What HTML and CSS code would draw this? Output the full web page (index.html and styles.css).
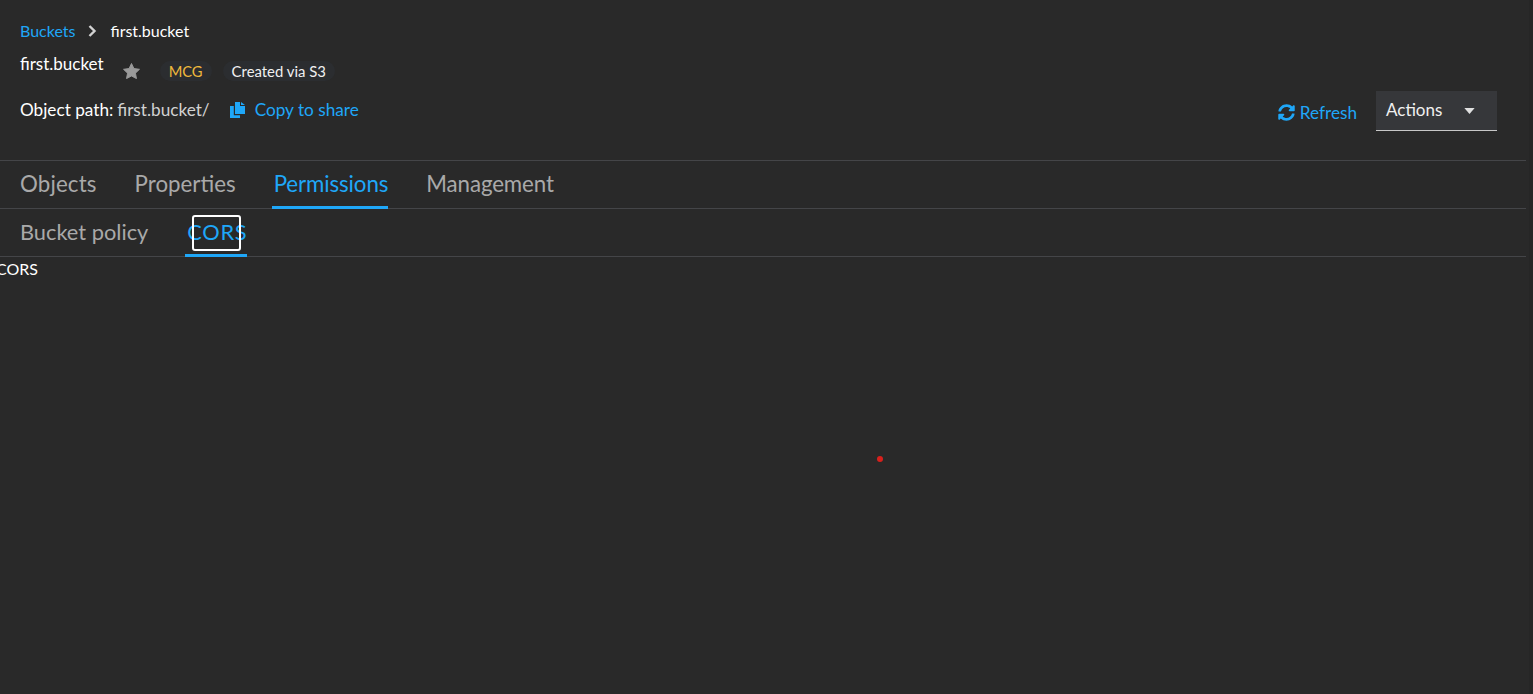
FILE: index.html
```html
<!DOCTYPE html>
<html lang="en">
<head>
<meta charset="utf-8">
<title>first.bucket</title>
<link rel="stylesheet" href="styles.css">
</head>
<body>
<div class="shell">
<div class="page">
  <header class="header">
    <div class="header-info">
      <nav class="breadcrumb">
        <a class="link">Buckets</a>
        <svg class="crumb-icon" viewBox="0 0 10 14"><path d="M2.5 2 L7.5 7 L2.5 12" fill="none" stroke="#d2d2d2" stroke-width="2.4"/></svg>
        <span class="crumb-current">first.bucket</span>
      </nav>
      <div class="title-row">
        <h1 class="title">first.bucket</h1>
        <svg class="star" viewBox="0 0 18 17"><path d="M9 0.5 L11.6 5.9 L17.5 6.7 L13.2 10.8 L14.3 16.6 L9 13.8 L3.7 16.6 L4.8 10.8 L0.5 6.7 L6.4 5.9 Z" fill="#9a9a9a" stroke="#9a9a9a" stroke-linejoin="round"/></svg>
        <span class="label label-gold">MCG</span>
        <span class="label">Created via S3</span>
      </div>
      <div class="path-row">
        <span class="path-key">Object path:</span>
        <span class="path-value">first.bucket/</span>
        <a class="link copy">
          <svg class="copy-icon" viewBox="0 0 15 16"><path d="M5 0 H10 V4 H15 V12 H5 Z M11 0 L15 3 H11 Z" fill="#1fa7f8"/><path d="M3.8 4 V13.3 H10 V16 H0 V4 Z" fill="#1fa7f8"/></svg>
          Copy to share
        </a>
      </div>
    </div>
    <div class="header-actions">
      <a class="link refresh">
        <svg class="refresh-icon" viewBox="0 0 512 512"><path fill="#1fa7f8" d="M370.7 133.3C339.5 104 298.9 88 255.8 88c-77.5.1-144.3 53.2-162.8 126.9-1.3 5.4-6.1 9.2-11.7 9.2H24.1c-7.5 0-13.2-6.8-11.8-14.2C33.9 94.9 134.8 8 256 8c66.4 0 126.8 26.1 171.3 68.7L463 41c15.1-15.1 41-4.4 41 17v134c0 13.3-10.7 24-24 24H346c-21.4 0-32.1-25.9-17-41l41.7-41.7zM32 296h134c21.4 0 32.1 25.9 17 41l-41.7 41.7c31.2 29.3 71.8 45.3 114.9 45.3 77.4-.1 144.3-53.1 162.8-126.8 1.3-5.4 6.1-9.2 11.7-9.2h57.3c7.5 0 13.2 6.8 11.8 14.2C478.1 417.1 377.2 504 256 504c-66.4 0-126.8-26.1-171.3-68.7L49 471c-15.1 15.1-41 4.4-41-17V320c0-13.3 10.7-24 24-24z"/></svg>
        Refresh
      </a>
      <button class="actions">
        <span>Actions</span>
        <svg class="caret" viewBox="0 0 12 7"><path d="M0 0 H12 L6 7 Z" fill="#e0e0e0"/></svg>
      </button>
    </div>
  </header>
  <div class="tabs">
    <a class="tab tab-objects">Objects</a>
    <a class="tab">Properties</a>
    <a class="tab tab-active tab-tight">Permissions</a>
    <a class="tab tab-tight">Management</a>
  </div>
  <div class="tabs subtabs">
    <a class="tab">Bucket policy</a>
    <a class="tab tab-active tab-focus">CORS<span class="focus-ring"></span></a>
  </div>
  <main class="content">
    <div class="cors-heading">CORS</div>
    <div class="dot"></div>
  </main>
</div>
<div class="scroll-track"></div>
</div>
</body>
</html>
```

FILE: styles.css
```css
* { box-sizing: border-box; }
html, body { margin: 0; height: 100%; background: #292929; overflow: hidden; }
body { font-family: "Lato", "Open Sans", sans-serif; color: #fff; font-size: 16px; }
.shell { display: flex; justify-content: space-between; height: 694px; }
.page { width: 1526px; height: 694px; display: flex; flex-direction: column; }
.scroll-track { width: 4px; background: #262626; }
.link { color: #1fa7f8; }

.header { height: 161px; padding: 18px 29px 0 20px; display: flex; justify-content: space-between; border-bottom: 1px solid #444548; }
.breadcrumb { display: flex; align-items: center; height: 24px; font-size: 16px; }
.crumb-icon { width: 10px; height: 14px; margin: 2px 13px 0 12px; }
.crumb-current { color: #fff; }
.title-row { display: flex; align-items: flex-start; margin-top: 11px; height: 30px; }
.title { margin: 0; font-size: 17px; font-weight: 400; line-height: 22px; }
.star { width: 17px; height: 16px; margin: 10px 0 0 19px; }
.label { font-size: 14.9px; line-height: 20px; margin-top: 8px; padding: 0 9px; color: #f0f0f0; background: #2b2d30; border-radius: 10px; margin-left: 11px; }
.label-gold { color: #f0b93c; margin-left: 20px; font-size: 14.7px; }
.path-row { display: flex; align-items: center; margin-top: 14px; height: 24px; font-size: 17.2px; }
.path-key { margin-right: 4px; }
.path-value { color: #d2d2d2; }
.copy { display: flex; align-items: center; margin-left: 20px; }
.copy-icon { width: 15px; height: 16px; margin-right: 10px; margin-top: 2px; }

.header-actions { display: flex; align-items: flex-start; margin-top: 73px; }
.refresh { display: flex; align-items: center; margin-top: 9px; height: 24px; font-size: 17.2px; }
.refresh-icon { width: 17px; height: 17px; margin: 1px 5px 0 0; }
.actions { width: 121px; height: 40px; margin-left: 19px; padding: 0 22px 2px 10px; display: flex; align-items: center; justify-content: space-between; background: #36373a; color: #f0f0f0; border: 0; border-bottom: 1px solid #c7c7c7; font: inherit; font-size: 17px; }
.caret { width: 11px; height: 6px; margin-top: 2px; }

.tabs { display: flex; height: 48px; padding-left: 20px; gap: 38px; border-bottom: 1px solid #444548; font-size: 22.3px; }
.tab { display: block; height: 48px; line-height: 45px; color: #a9a9a9; position: relative; }
.tab-objects { letter-spacing: 0.15px; }
.tab-tight { letter-spacing: -0.1px; }
.tab-active { color: #1fa7f8; border-bottom: 3px solid #1fa7f8; margin-left: -2px; padding-left: 2px; }
.subtabs { gap: 39px; font-size: 21.8px; }
.tab-focus { letter-spacing: 0.7px; }
.focus-ring { position: absolute; left: 7px; top: 6px; width: 49px; height: 36px; border: 2px solid #fff; border-radius: 3px; }

.content { flex: 1; position: relative; }
.cors-heading { font-size: 16px; line-height: 24px; margin-left: -4px; }
.dot { position: absolute; left: 877px; top: 199px; width: 6px; height: 6px; border-radius: 50%; background: #d8201c; }
```
